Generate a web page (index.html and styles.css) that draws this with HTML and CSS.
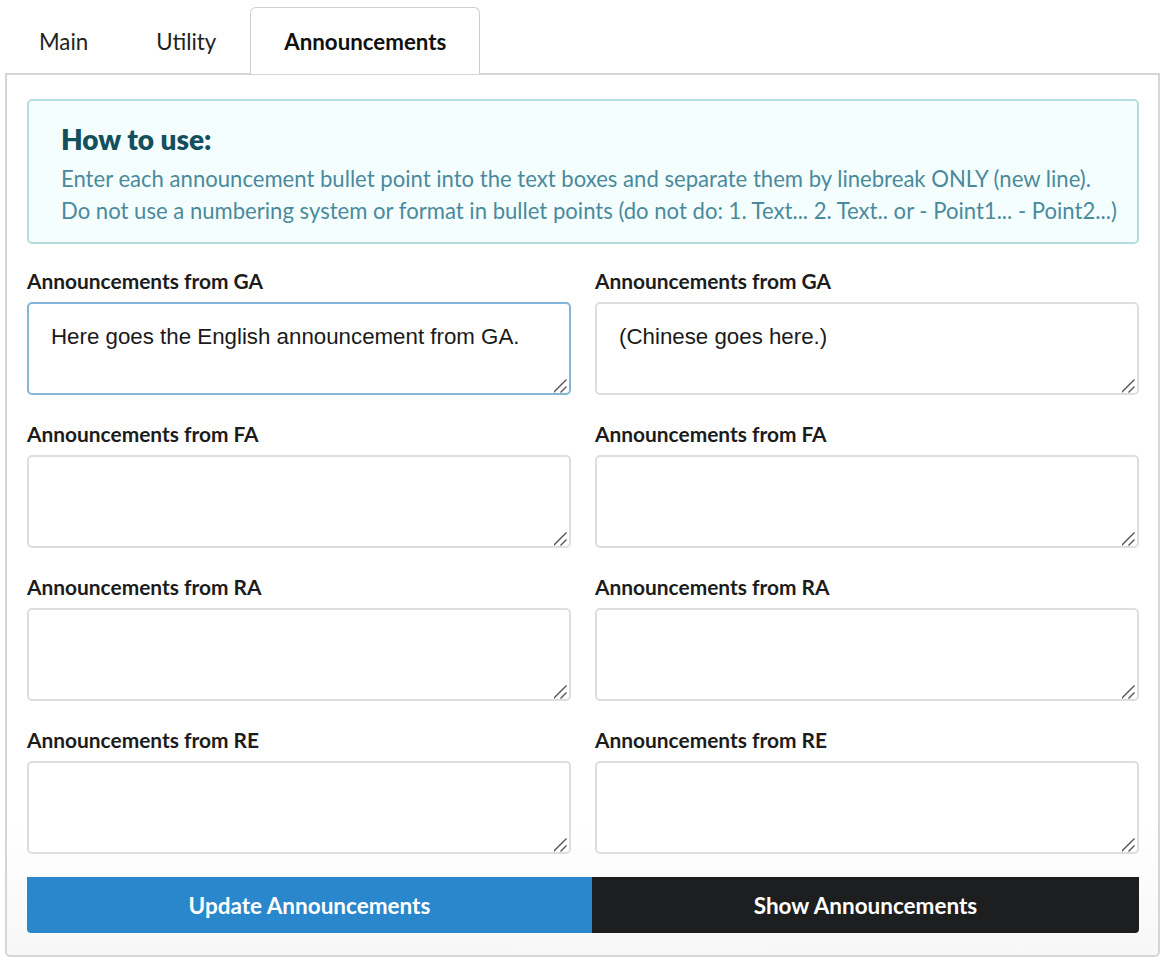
FILE: index.html
```html
<!DOCTYPE html>
<html lang="en">
<head>
<meta charset="utf-8">
<title>Announcements</title>
<link rel="stylesheet" href="styles.css">
</head>
<body>
<div class="wrap">
  <nav class="tabs">
    <div class="tab">Main</div>
    <div class="tab">Utility</div>
    <div class="tab active">Announcements</div>
  </nav>
  <section class="panel">
    <div class="info">
      <h2 class="info-title">How to use:</h2>
      <p class="info-text">Enter each announcement bullet point into the text boxes and separate them by linebreak ONLY (new line).<br>Do not use a numbering system or format in bullet points (do not do: 1. Text... 2. Text.. or - Point1... - Point2...)</p>
    </div>
    <div class="fields">
      <div class="field"><label class="label">Announcements from GA</label><textarea class="box focused">Here goes the English announcement from GA.</textarea></div>
      <div class="field"><label class="label">Announcements from GA</label><textarea class="box">(Chinese goes here.)</textarea></div>
      <div class="field"><label class="label">Announcements from FA</label><textarea class="box"></textarea></div>
      <div class="field"><label class="label">Announcements from FA</label><textarea class="box"></textarea></div>
      <div class="field"><label class="label">Announcements from RA</label><textarea class="box"></textarea></div>
      <div class="field"><label class="label">Announcements from RA</label><textarea class="box"></textarea></div>
      <div class="field"><label class="label">Announcements from RE</label><textarea class="box"></textarea></div>
      <div class="field"><label class="label">Announcements from RE</label><textarea class="box"></textarea></div>
    </div>
    <div class="actions">
      <button class="btn btn-update">Update Announcements</button>
      <button class="btn btn-show">Show Announcements</button>
    </div>
  </section>
</div>
</body>
</html>
```
FILE: styles.css
```css
* { box-sizing: border-box; }
html, body { margin: 0; padding: 0; background: #fff; }
body { font-family: Lato, "Open Sans", sans-serif; color: #222; }
.wrap { padding: 7px 6px 4px 5px; }
.tabs { display: flex; position: relative; z-index: 1; }
.tab {
  padding: 1px 33px 0;
  height: 66px;
  line-height: 66px;
  font-size: 22.3px;
  color: #222;
  border: 1px solid transparent;
  border-bottom: none;
}
.tab.active {
  font-weight: 700;
  color: #111;
  border-color: #cfcfcf;
  border-radius: 6px 6px 0 0;
  background: #fff;
  height: 67px;
  margin-bottom: -1px;
}
.panel {
  border: 2px solid #d6d6d6;
  border-radius: 0 0 5px 5px;
  background: linear-gradient(#fff 85%, #f7f7f7);
  padding: 24px 19px 22px 20px;
}
.info {
  background: #f4fefe;
  border: 2px solid #b4dde2;
  border-radius: 5px;
  padding: 21px 32px 15px 32px;
}
.info-title {
  margin: 0 0 7px;
  font-size: 28px;
  line-height: 34px;
  font-weight: 800;
  color: #144f5e;
}
.info-text {
  margin: 0;
  font-size: 22.1px;
  line-height: 32px;
  color: #4a8a9c;
  white-space: nowrap;
}
.fields {
  display: grid;
  grid-template-columns: 1fr 1fr;
  column-gap: 24px;
  row-gap: 26px;
  margin-top: 24px;
}
.field { display: flex; flex-direction: column; }
.label {
  font-size: 20.9px;
  line-height: 26px;
  font-weight: 700;
  color: #1c1c1c;
  margin-bottom: 8px;
}
.box {
  height: 93px;
  border: 2px solid #dedede;
  border-radius: 5px;
  padding: 20px 22px;
  font-family: "Liberation Sans", Arial, sans-serif;
  font-size: 22.3px;
  line-height: 26px;
  color: #1a1a1a;
  background: #fff;
  resize: vertical;
  outline: none;
}
.box::-webkit-resizer {
  width: 16px;
  height: 16px;
  background: url("data:image/svg+xml,%3Csvg xmlns='http://www.w3.org/2000/svg' width='16' height='16'%3E%3Cpath d='M0.5 15.5L13.5 2.5M7.5 15.5L13.5 9.5' stroke='%23555' stroke-width='1.4' fill='none'/%3E%3C/svg%3E") no-repeat right bottom;
}
.box.focused { border-color: #84b6d6; }
.actions { display: flex; margin-top: 23px; }
.btn {
  border: none;
  height: 56px;
  font-family: Lato, "Open Sans", sans-serif;
  font-weight: 700;
  font-size: 22.5px;
  color: #fff;
  cursor: pointer;
}
.btn-update { flex: 0 0 565px; background: #2a87cc; border-radius: 0 0 0 4px; }
.btn-show { flex: 1; background: #1d1e20; border-radius: 0 0 4px 0; }
```
